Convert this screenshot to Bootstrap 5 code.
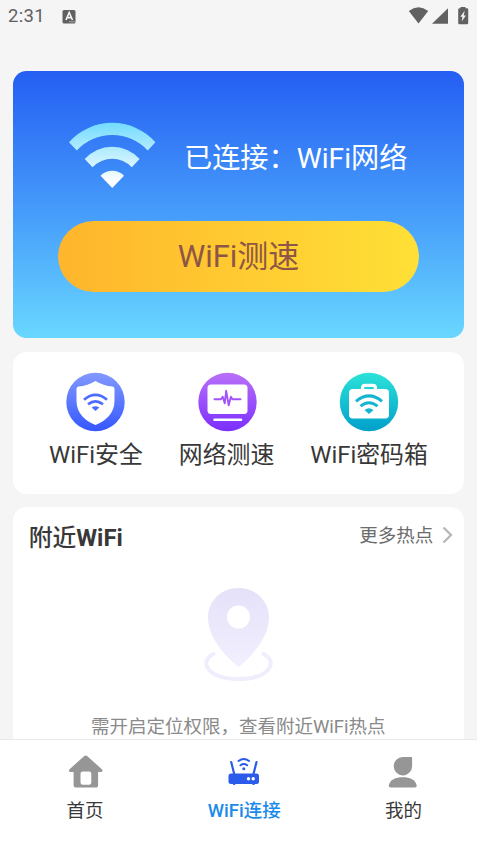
<!DOCTYPE html>
<html lang="zh-CN">
<head>
<meta charset="utf-8">
<meta name="viewport" content="width=device-width, initial-scale=1">
<title>WiFi连接</title>
<link href="https://cdn.jsdelivr.net/npm/bootstrap@5.3.0/dist/css/bootstrap.min.css" rel="stylesheet">
<style>
body{background:#f5f5f5;color:#383838;font-family:Roboto,"Noto Sans CJK SC",sans-serif;line-height:1}
svg{display:block;flex:none}
.screen{height:848px}
.status-bar{height:32px;padding:1px 8px 0 8px;color:#616161;font-size:18.5px;letter-spacing:.3px}
.content-area{padding:38.5px 13.2px 0;min-height:0}
.panel{border-radius:13.5px}
.hero{height:267.5px;padding:51.5px 45px 0;background:linear-gradient(#245ef3,#469cfa 53%,#69d7ff)}
.hero-row{height:66px;padding-left:10.8px;gap:28px;font-size:28.2px}
.hero-row span{padding-top:8px}
.speed-btn{margin-top:33px;height:70.5px;font-size:31px;line-height:1;color:#8e5646;background:linear-gradient(90deg,#ffb52c,#ffe036);border:0;padding:0}
.tools{height:142.5px;margin-top:13.5px;padding-top:20px;font-size:23.9px}
.tools svg{margin-bottom:12.5px}
.nearby{margin-top:13px;padding:18px 9.500px 0 15.500px}
.nearby h2{font-size:23.8px;font-weight:700;line-height:27px}
.cjk-title{font-weight:500}
.more{font-size:18.5px;color:#6c6c6c;gap:8px;padding-bottom:4px}
.more svg{margin-top:-3px}
.hint{font-size:18.5px;color:#8a8a8a;margin-top:34px;padding-right:6.500px;white-space:nowrap}
.tabs{width:483px;height:109.5px;border-top:1px solid #e9e9e9;font-size:18.5px;padding:13.500px 0 0 5.500px}
.tabs a{color:#383838;gap:12.500px}
.tabs a.current{color:#1a8bea;font-weight:500}
</style>
</head>
<body>
<div class="screen d-flex flex-column overflow-hidden">
  <header class="status-bar d-flex align-items-center flex-shrink-0">
    <span>2:31</span>
    <svg class="ms-3" width="16" height="16" viewBox="61 8 16 16"><rect x="62.500" y="9" width="13" height="13.500" rx="1.500" fill="#616161"/><path d="M66 19 69.200 11.500l3.300 7.500M67.300 16.600h3.800" fill="none" stroke="#f5f5f5" stroke-width="1.600"/><path d="M69 20.800h6" stroke="#bbb" stroke-width=".8"/></svg>
    <svg class="ms-auto" width="62" height="20" viewBox="407 6.700 62 20" fill="#616161"><path d="M408.800 10.600Q418.500 3.500 428.200 10.600L418.500 23.300Z"/><path d="M448 8v15.500h-16Z"/><path d="M460.500 8v-1.700h5V8h1.500q1.200 0 1.200 1.200v13.500q0 1.300-1.200 1.300h-7.500q-1.300 0-1.300-1.300V9.200q0-1.200 1.300-1.200Z"/><path d="M464.700 10.500 460.300 16.500h2.200l-.8 4.700 4.200-6h-2.200Z" fill="#f5f5f5"/></svg>
  </header>

  <main class="content-area flex-grow-1 overflow-hidden">
    <section class="panel hero">
      <div class="hero-row d-flex align-items-center text-white text-nowrap">
        <svg width="87" height="66" viewBox="69 121.700 87 66"><defs><linearGradient id="gWave" gradientUnits="userSpaceOnUse" x1="0" y1="124" x2="0" y2="182"><stop stop-color="#76dcff"/><stop offset="1" stop-color="#fff"/></linearGradient></defs><g fill="url(#gWave)"><path d="M69 142A57.600 57.600 0 0 1 155.400 142L147.700 150.200A48.400 48.400 0 0 0 76.800 150.200Z"/><path d="M84.700 158.600A37 37 0 0 1 139.600 158.600L131.800 167A27 27 0 0 0 92.600 167Z"/><path d="M100.500 175.400A16.400 16.400 0 0 1 124 175.400L112.250 187.700Z"/></g></svg>
        <span>已连接：WiFi网络</span>
      </div>
      <button class="speed-btn btn rounded-pill w-100 d-block" type="button">WiFi测速</button>
    </section>

    <section class="panel tools bg-white d-flex justify-content-evenly align-items-start text-nowrap">
      <div class="d-flex flex-column align-items-center">
        <svg width="60" height="60" viewBox="0 0 60 60"><defs><linearGradient id="gBlue" x2="0" y2="1"><stop stop-color="#8299ff"/><stop offset="1" stop-color="#3557ff"/></linearGradient></defs><circle cx="29.500" cy="30" r="29.200" fill="url(#gBlue)"/><path d="M29.500 9Q37.500 13.800 46.500 14.500 48.500 14.700 48.500 17V29C48.500 41 40 49 29.500 53 19 49 10.500 41 10.500 29V17Q10.500 14.700 12.500 14.500 21.500 13.800 29.500 9Z" fill="#fff"/><g fill="none" stroke="#4e6bff" stroke-width="2.700"><path d="M18 27.700Q29.500 18 41 27.700M22 32.300Q29.500 26.300 37 32.300"/></g><path d="M25.700 35.500Q29.500 33 33.300 35.500L29.500 39Z" fill="#4e6bff"/></svg>
        <span>WiFi安全</span>
      </div>
      <div class="d-flex flex-column align-items-center">
        <svg width="60" height="60" viewBox="0 0 60 60"><defs><linearGradient id="gPurple" x2="0" y2="1"><stop stop-color="#b970f8"/><stop offset="1" stop-color="#7b2fff"/></linearGradient></defs><circle cx="30.500" cy="30" r="29.200" fill="url(#gPurple)"/><rect x="10.500" y="12.500" width="40" height="29.500" rx="3.500" fill="#fff"/><path d="M17.500 47.700h26.500" stroke="#fff" stroke-width="2.600" stroke-linecap="round"/><path d="M17.500 27.300H24l1.700-2.500 2 6.500 1.500-12.500 2.500 14.500 2.200-8.500 1.500 2.500h8.100" fill="none" stroke="#a252fb" stroke-width="1.900" stroke-linejoin="round" stroke-linecap="round"/></svg>
        <span>网络测速</span>
      </div>
      <div class="d-flex flex-column align-items-center">
        <svg width="60" height="60" viewBox="0 0 60 60"><defs><linearGradient id="gTeal" x2="0" y2="1"><stop stop-color="#2ce2d8"/><stop offset="1" stop-color="#00a0ca"/></linearGradient></defs><circle cx="30" cy="30" r="29.200" fill="url(#gTeal)"/><path d="M23.500 18v-2q0-2.700 2.700-2.700h7.600q2.700 0 2.700 2.700V18" fill="none" stroke="#fff" stroke-width="3.200"/><rect x="10" y="17" width="40" height="29.500" rx="3.800" fill="#fff"/><g fill="none" stroke="#13b5cf" stroke-width="3"><path d="M17 29.400Q30 18.400 43 29.400M21.500 34.200Q30 27.200 38.500 34.200"/></g><path d="M25.500 38Q30 34.700 34.500 38L30 42Z" fill="#13b5cf"/></svg>
        <span>WiFi密码箱</span>
      </div>
    </section>

    <section class="panel nearby bg-white h-100">
      <div class="d-flex justify-content-between align-items-center">
        <h2 class="mb-0"><span class="cjk-title">附近</span>WiFi</h2>
        <a class="more d-flex align-items-center text-decoration-none" href="#"><span>更多热点</span>
          <svg width="13" height="20" viewBox="0 0 13 20"><path d="M2.500 2.500 10 10l-7.500 7.500" fill="none" stroke="#b8b8b8" stroke-width="2.300"/></svg></a>
      </div>
      <div class="d-flex justify-content-center pe-1">
        <svg class="mt-4" width="72" height="108" viewBox="204 576 72 108"><defs><linearGradient id="gPin" x2="0" y2="1"><stop stop-color="#e5e1f9"/><stop offset="1" stop-color="#f2effe"/></linearGradient></defs><path fill-rule="evenodd" d="M238.500 588C221 588 208 601 208 617.500 208 637 224 655 238.500 667 253 655 269 637 269 617.500 269 601 256 588 238.500 588ZM238.500 605.500a11.500 11.500 0 1 1 0 23 11.500 11.500 0 0 1 0-23Z" fill="url(#gPin)"/><path d="M213.500 654C198 662 208 679 238.500 679S279 662 263.500 654" fill="none" stroke="#f0edfd" stroke-width="4" stroke-linecap="round" /></svg>
      </div>
      <p class="hint mb-0 text-center">需开启定位权限，查看附近WiFi热点</p>
    </section>
  </main>

  <nav class="tabs bg-white d-flex flex-shrink-0">
    <a class="col d-flex flex-column align-items-center text-decoration-none" href="#">
      <svg width="36" height="36" viewBox="67.500 752.500 36 36"><path fill-rule="evenodd" d="M84.500 755.700q1.700-1.300 3.400 0L102.300 768.700q1.800 2.200-.8 2.800H98.600V784.500q0 2.600-2.600 2.600H76.700q-2.600 0-2.600-2.600V771.500H71q-2.700-.6-.9-2.800ZM83.300 771q-2.300 0-2.300 2.300V782q0 2.200 2.300 2.200h6.200q2.300 0 2.300-2.200V773.300q0-2.300-2.300-2.300Z" fill="#969696"/></svg>
      <span>首页</span></a>
    <a class="current col d-flex flex-column align-items-center text-decoration-none" href="#">
      <svg width="36" height="36" viewBox="226.500 753 36 36"><rect x="229" y="773.500" width="30.500" height="10.500" rx="2.500" fill="#2b5bea"/><path d="M231.700 762l3 12M257 762l-3 12" stroke="#2b5bea" stroke-width="2.200" stroke-linecap="round"/><path d="M234.700 783v2M254 783v2" stroke="#2b5bea" stroke-width="2"/><path d="M239 761q5.300-4 10.600 0M241 765.300q3.300-2.400 6.600 0" fill="none" stroke="#2b5bea" stroke-width="2" stroke-linecap="round"/><circle cx="244.300" cy="768.700" r="1.500" fill="#2b5bea"/><g fill="#fff"><circle cx="249" cy="778.700" r="1.700"/><circle cx="253.700" cy="778.700" r="1.700"/></g></svg>
      <span>WiFi连接</span></a>
    <a class="col d-flex flex-column align-items-center text-decoration-none" href="#">
      <svg width="36" height="36" viewBox="385.500 753 36 36" fill="#969696"><path d="M403.300 757h8.500q.8 0 .8.800v8.200a9.200 9.200 0 1 1-9.300-9Z"/><path d="M391 787.500Q389.300 787.500 389.300 785.500C390.500 779.500 396 777.200 403.200 777.200S416 779.500 417.200 785.500Q417.200 787.500 415.500 787.500Z"/></svg>
      <span>我的</span></a>
  </nav>
</div>
<script src="https://cdn.jsdelivr.net/npm/bootstrap@5.3.0/dist/js/bootstrap.bundle.min.js"></script>
</body>
</html>
